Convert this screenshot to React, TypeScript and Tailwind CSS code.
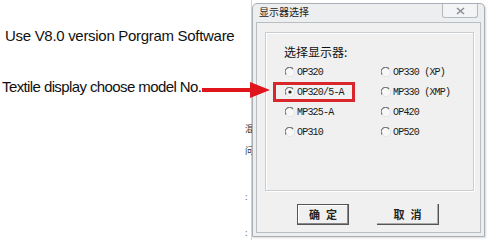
import React from 'react';

interface Option {
  label: string;
  checked?: boolean;
}

const options: Option[][] = [
  [{ label: 'OP320' }, { label: 'OP330 (XP)' }],
  [{ label: 'OP320/5-A', checked: true }, { label: 'MP330 (XMP)' }],
  [{ label: 'MP325-A' }, { label: 'OP420' }],
  [{ label: 'OP310' }, { label: 'OP520' }],
];

const Radio: React.FC<{ checked?: boolean }> = ({ checked }) => (
  <svg width="10" height="10" viewBox="0 0 10 10" className="shrink-0">
    <circle cx="5" cy="5" r="4.2" fill="#f7f7f7" />
    <path d="M8 2 A4.2 4.2 0 0 0 1.2 7.5" fill="none" stroke="#707070" strokeWidth="1.2" />
    <path d="M1.8 8.2 A4.2 4.2 0 0 0 8.4 2.6" fill="none" stroke="#e4e4e4" strokeWidth="1" />
    {checked && <circle cx="5" cy="5" r="1.6" fill="#222" />}
  </svg>
);

const App: React.FC = () => {
  return (
    <div className="relative w-[488px] h-[240px] bg-white overflow-hidden flex" style={{ fontFamily: '"Liberation Sans", Arial, sans-serif' }}>
      {/* left annotations */}
      <div className="w-[245px] shrink-0 text-[#111]">
        <div className="pl-[5px] pt-[27px] text-[15px] leading-[18px] tracking-[-0.3px]">Use V8.0 version Porgram Software</div>
        <div className="pl-[2px] pt-[33px] text-[15px] leading-[18px] tracking-[-0.6px]">Textile display choose model No.</div>
      </div>

      {/* faint window behind dialog */}
      <div className="w-[7px] shrink-0 flex flex-col items-start pt-[124px] gap-[12px] text-[#333] text-[9px] leading-[10px] border-r border-[#cfd4d8]" style={{ fontFamily: '"Noto Sans CJK SC", sans-serif' }}>
        <span>混</span>
        <span>问</span>
        <span className="pt-[24px] text-[#777]">:</span>
        <span className="pt-[14px] text-[#777]">:</span>
      </div>

      {/* dialog */}
      <div className="mt-[3px] w-[233px] h-[234px] shrink-0 bg-[#eceef0] border border-[#a9afb5] rounded-t-[5px] flex flex-col shadow-[1px_1px_2px_rgba(0,0,0,0.15)]">
        <div className="h-[18px] flex items-start justify-between pl-[6px] pr-[6px]">
          <span className="pt-[2px] text-[10px] leading-[12px] text-[#222]" style={{ fontFamily: '"Noto Sans CJK SC", sans-serif' }}>显示器选择</span>
          <div className="w-[36px] h-[14px] border border-t-0 border-[#b4b9be] rounded-b-[3px] bg-[#f3f4f5] flex items-center justify-center">
            <svg width="9" height="8" viewBox="0 0 9 8">
              <path d="M1 1 L8 7 M8 1 L1 7" stroke="#8a8f94" strokeWidth="1.6" />
            </svg>
          </div>
        </div>
        <div className="mx-[3px] mb-[3px] flex-1 bg-[#f0f0f0] border border-[#b9bec3] flex flex-col pt-[9px] pl-[8px] pr-[6px]">
          {/* group box */}
          <div className="relative h-[159px] border border-[#c9ced2] shadow-[inset_1px_1px_0_#fff,1px_1px_0_#fff] pl-[19px] pt-[12px]">
            <div className="-ml-[1px] text-[12px] leading-[14px] text-[#111] mb-[3px]" style={{ fontFamily: '"Noto Sans CJK SC", sans-serif' }}>选择显示器:</div>
            <div className="grid grid-cols-[96px_1fr]">
              {options.map((row, r) =>
                row.map((opt, c) => (
                  <div key={`${r}-${c}`} className="relative h-[20px] flex items-center gap-[2px]">
                    <Radio checked={opt.checked} />
                    <span className="text-[10px] tracking-[-0.8px] text-[#1a1a1a] whitespace-pre" style={{ fontFamily: '"Liberation Mono", monospace' }}>
                      {opt.label}
                    </span>
                    {opt.checked && (
                      <div className="absolute left-[-12px] top-[0px] w-[82px] h-[20px] border-[3px] border-[#d8262c]" />
                    )}
                  </div>
                ))
              )}
            </div>
          </div>
          <div className="flex gap-[28px] pl-[32px] pt-[13px]" style={{ fontFamily: '"Noto Sans CJK SC", sans-serif' }}>
            <button className="w-[52px] h-[21px] border border-[#555] bg-[#f0f0f0] shadow-[inset_-1px_-1px_0_#888,inset_1px_1px_0_#fff] text-[11px] font-bold text-[#222] tracking-[6px] pl-[6px]">确定</button>
            <button className="w-[62px] h-[21px] border-r border-b border-[#555] bg-[#f0f0f0] shadow-[inset_-1px_-1px_0_#aaa] text-[11px] font-bold text-[#222] tracking-[6px] pl-[6px]">取消</button>
          </div>
        </div>
      </div>

      {/* red arrow annotation */}
      <svg className="absolute left-[202px] top-[81px]" width="70" height="18" viewBox="0 0 70 18">
        <rect x="0" y="7" width="50" height="4" fill="#e0141b" />
        <polygon points="48,1 68,9 48,17" fill="#e0141b" />
      </svg>
    </div>
  );
};

export default App;
